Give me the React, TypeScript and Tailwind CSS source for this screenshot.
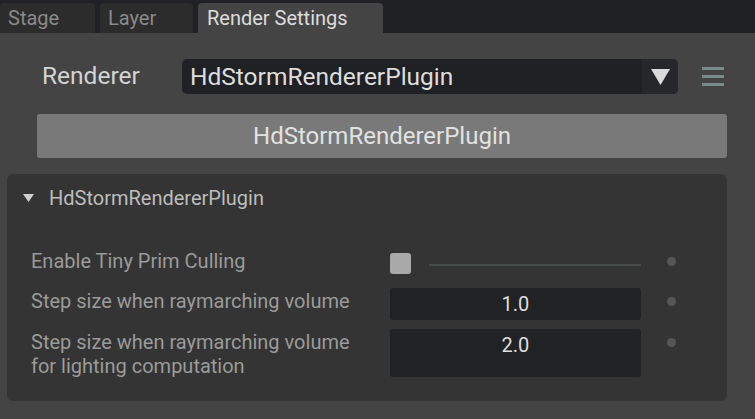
const font = { fontFamily: 'Roboto, "Noto Sans", sans-serif' };

function Dot() {
  return <div className="mt-[9px] ml-[26px] h-[9px] w-[9px] shrink-0 rounded-full bg-[#565656]" />;
}

export default function App() {
  return (
    <div style={font} className="flex h-[419px] w-[755px] flex-col overflow-hidden bg-[#444444]">
      {/* tab strip */}
      <div className="flex h-[33px] shrink-0 items-end gap-[5px] bg-[#202124]">
        <div className="flex h-[30px] w-[95px] items-center rounded-t-[4px] bg-[#2c2c2c] pl-[8px] text-[20px] text-[#8a8a8a]">
          Stage
        </div>
        <div className="flex h-[30px] w-[93px] items-center rounded-t-[4px] bg-[#2c2c2c] pl-[8px] text-[20px] text-[#8a8a8a]">
          Layer
        </div>
        <div className="flex h-[30px] w-[185px] items-center rounded-t-[4px] bg-[#444444] pl-[9px] text-[20px] text-[#dcdcdc]">
          Render Settings
        </div>
      </div>

      {/* renderer picker */}
      <div className="mt-[26px] flex h-[35px] items-center">
        <span className="ml-[42px] w-[140px] text-[24.5px] text-[#d4d4d4]">Renderer</span>
        <div className="flex h-[35px] w-[496px] overflow-hidden rounded-[5px] bg-[#202124]">
          <span className="flex-1 pl-[8px] text-[24.5px] leading-[35px] text-[#dedede]">HdStormRendererPlugin</span>
          <div className="flex w-[36px] items-center justify-center bg-[#26272a]">
            <svg width="19" height="16" viewBox="0 0 19 16">
              <polygon points="0,0 19,0 9.5,16" fill="#dadada" />
            </svg>
          </div>
        </div>
        <div className="ml-[24px] flex w-[22px] flex-col gap-[5px]">
          <div className="h-[3px] bg-[#7b8b8b]" />
          <div className="h-[3px] bg-[#7b8b8b]" />
          <div className="h-[3px] bg-[#7b8b8b]" />
        </div>
      </div>

      <button className="mt-[20px] ml-[37px] h-[44px] w-[690px] rounded-[3px] bg-[#797979] text-[24px] text-[#e2e2e2]">
        HdStormRendererPlugin
      </button>

      {/* plugin settings group */}
      <div className="mt-[16px] ml-[7px] w-[720px] rounded-[6px] bg-[#333433] pb-[24px]">
        <div className="flex h-[48px] items-center pl-[16px]">
          <svg width="11" height="8" viewBox="0 0 11 8">
            <polygon points="0,0 11,0 5.5,8" fill="#d0d0d0" />
          </svg>
          <span className="ml-[15px] text-[20px] text-[#bdbdbd]">HdStormRendererPlugin</span>
        </div>

        <div className="flex flex-col pt-[26px] pl-[24px] text-[20px] leading-[24px] text-[#9b9b9b]">
          <div className="flex h-[40px] items-start">
            <span className="mt-[1px] w-[359px]">Enable Tiny Prim Culling</span>
            <div className="mt-[5px] flex w-[251px] items-start">
              <div className="h-[21px] w-[21px] rounded-[3px] bg-[#a9a9a9]" />
              <div className="mt-[11px] ml-[18px] h-[2px] flex-1 bg-[#464a4b]" />
            </div>
            <Dot />
          </div>

          <div className="flex h-[41px] items-start">
            <span className="mt-[1px] w-[359px]">Step size when raymarching volume</span>
            <div className="flex h-[32px] w-[251px] items-center justify-center rounded-[3px] bg-[#212223] text-[20px] text-[#dedede]">
              1.0
            </div>
            <Dot />
          </div>

          <div className="flex h-[48px] items-start">
            <span className="mt-[1px] w-[359px]">
              Step size when raymarching volume
              <br />
              for lighting computation
            </span>
            <div className="h-[48px] w-[251px] rounded-[3px] bg-[#212223] text-center text-[20px] leading-[32px] text-[#dedede]">
              2.0
            </div>
            <Dot />
          </div>
        </div>
      </div>
    </div>
  );
}
